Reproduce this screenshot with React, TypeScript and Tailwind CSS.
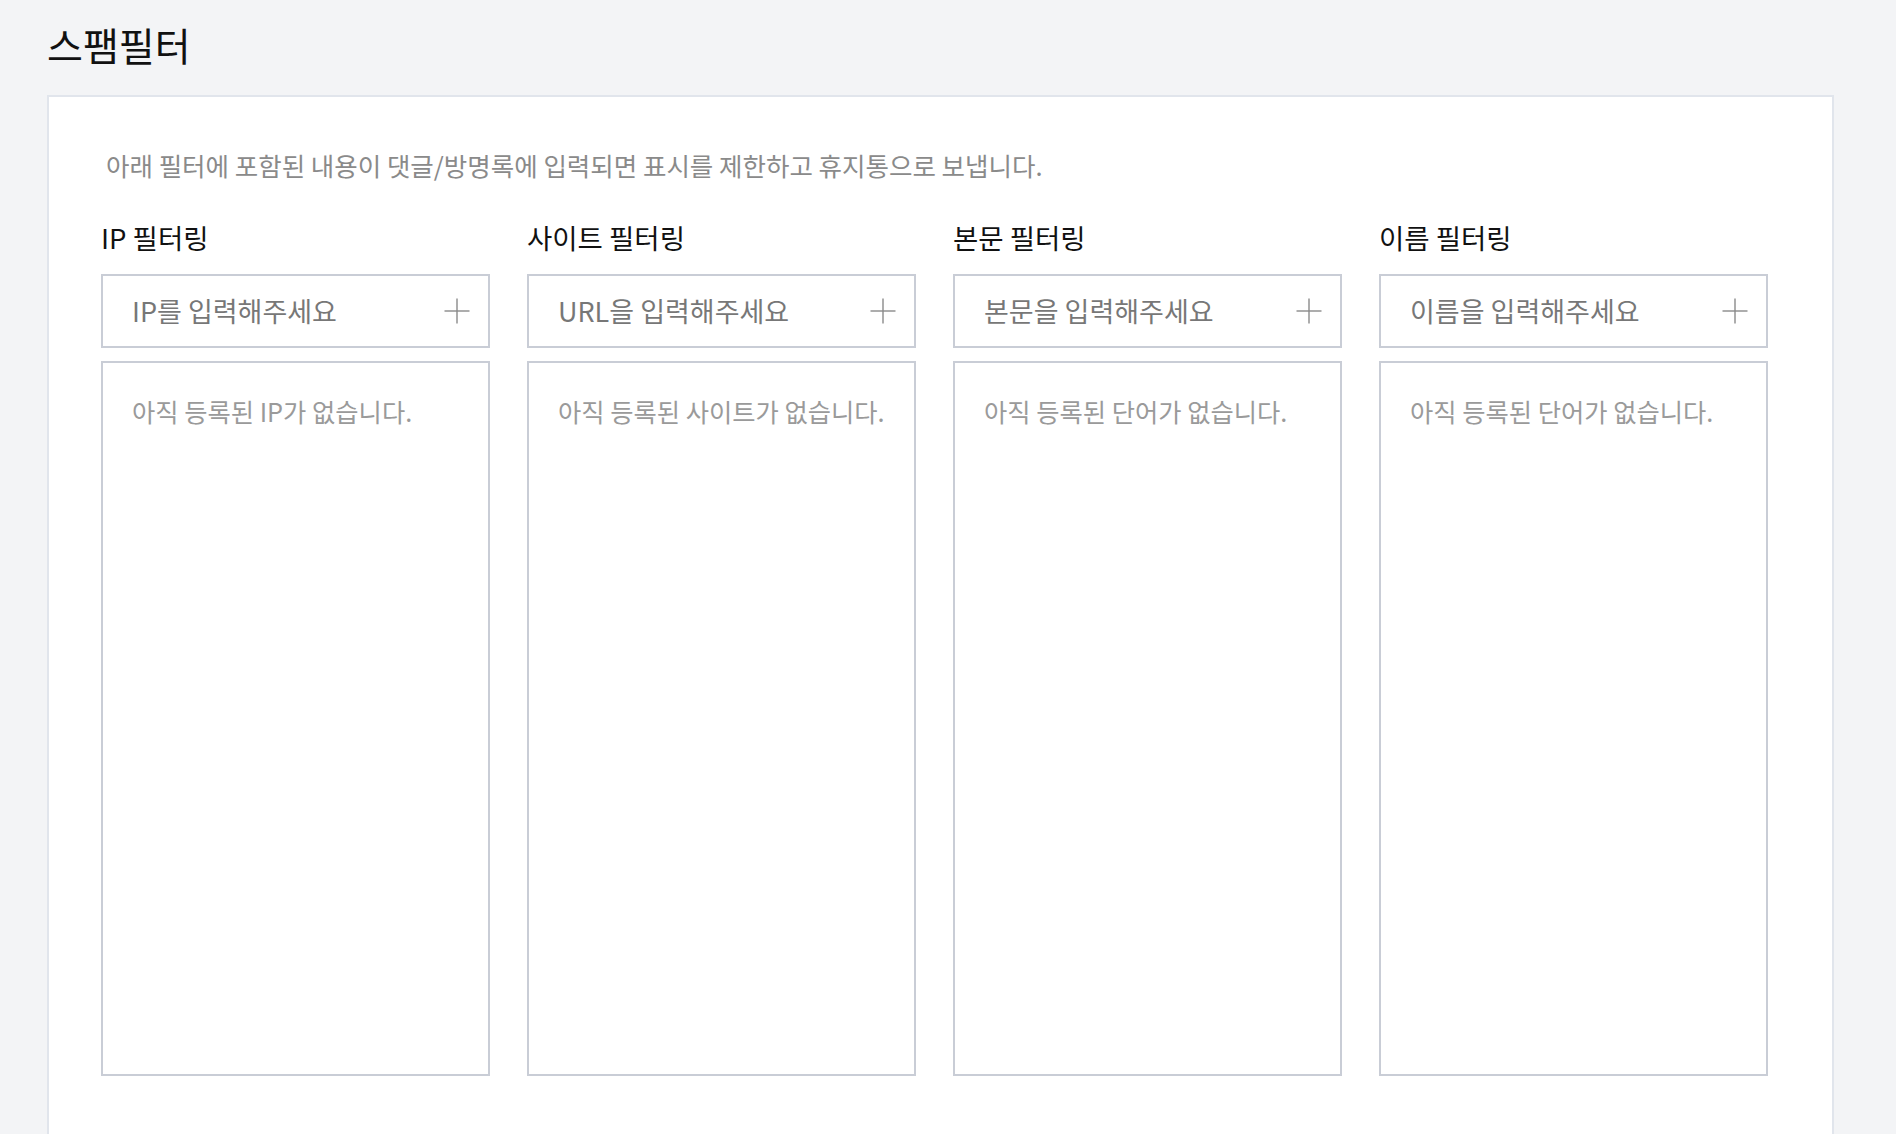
import { useState } from 'react';

const font = { fontFamily: '"Noto Sans CJK KR", "Noto Sans", sans-serif' };

interface FilterColumn {
  key: string;
  title: string;
  placeholder: string;
  empty: string;
}

const columns: FilterColumn[] = [
  { key: 'ip', title: 'IP 필터링', placeholder: 'IP를 입력해주세요', empty: '아직 등록된 IP가 없습니다.' },
  { key: 'site', title: '사이트 필터링', placeholder: 'URL을 입력해주세요', empty: '아직 등록된 사이트가 없습니다.' },
  { key: 'body', title: '본문 필터링', placeholder: '본문을 입력해주세요', empty: '아직 등록된 단어가 없습니다.' },
  { key: 'name', title: '이름 필터링', placeholder: '이름을 입력해주세요', empty: '아직 등록된 단어가 없습니다.' }
];

export default function App() {
  return (
    <div className="min-h-screen bg-[#f3f4f6] px-[47px] pt-[17px]" style={font}>
      <h1 className="text-[39px] font-normal leading-[54px] text-[#111]">스팸필터</h1>
      <section className="mt-[24px] w-[1787px] border-2 border-[#e1e5ec] bg-white px-[52px] pb-[90px] pt-[50px]">
        <p className="pl-[5px] text-[25.5px] leading-[36px] text-[#8a8a8a]">
          아래 필터에 포함된 내용이 댓글/방명록에 입력되면 표시를 제한하고 휴지통으로 보냅니다.
        </p>
        <div className="mt-[36px] grid grid-cols-[repeat(4,389px)] gap-x-[37px]">
          {columns.map((column) => (
            <FilterPanel key={column.key} column={column} />
          ))}
        </div>
      </section>
    </div>
  );
}

function FilterPanel({ column }: { column: FilterColumn }) {
  const [value, setValue] = useState('');
  const [items, setItems] = useState<string[]>([]);

  const add = () => {
    if (!value.trim()) return;
    setItems((prev) => [...prev, value.trim()]);
    setValue('');
  };

  return (
    <div className="flex flex-col">
      <h2 className="text-[27.5px] font-normal leading-[36px] text-[#111]">{column.title}</h2>
      <div className="mt-[19px] flex h-[74px] items-center border-2 border-[#c9cdd6] pl-[29px] pr-[18px]">
        <input
          value={value}
          onChange={(event) => setValue(event.target.value)}
          onKeyDown={(event) => event.key === 'Enter' && add()}
          placeholder={column.placeholder}
          className="min-w-0 flex-1 bg-transparent text-[27px] leading-[36px] text-[#333] outline-none placeholder:text-[#777]"
        />
        <button type="button" onClick={add} className="ml-3 flex h-[26px] w-[26px] items-center justify-center text-[#8a8a8a]">
          <svg width="26" height="26" viewBox="0 0 26 26" fill="none" stroke="currentColor" strokeWidth="1.4">
            <line x1="13" y1="0.5" x2="13" y2="25.5" />
            <line x1="0.5" y1="13" x2="25.5" y2="13" />
          </svg>
        </button>
      </div>
      <div className="mt-[13px] h-[715px] border-2 border-[#c9cdd6] pl-[29px] pr-[10px] pt-[30px]">
        {items.length === 0 ? (
          <p className="whitespace-nowrap text-[25.3px] leading-[36px] text-[#9a9a9a]">{column.empty}</p>
        ) : (
          <ul className="space-y-2 text-[24px] text-[#333]">
            {items.map((item, index) => (
              <li key={`${item}-${index}`}>{item}</li>
            ))}
          </ul>
        )}
      </div>
    </div>
  );
}
